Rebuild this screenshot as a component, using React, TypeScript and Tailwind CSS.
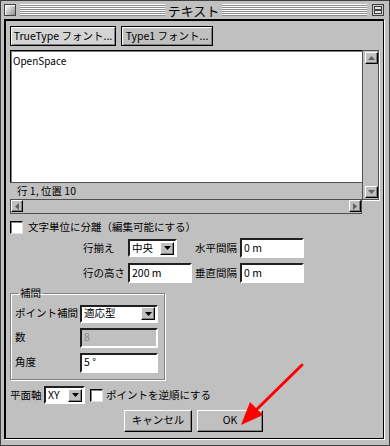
import React from 'react';

const stripes =
  'bg-[repeating-linear-gradient(to_bottom,#ffffff_0px,#ffffff_1px,#8c8c8c_1px,#8c8c8c_2px)]';
const raised =
  'bg-[#c0c0c0] border border-t-white border-l-white border-r-black border-b-black shadow-[inset_-1px_-1px_0_#808080]';
const sunken =
  'border-2 border-t-[#202020] border-l-[#202020] border-r-white border-b-white';

function DownTri({ color = '#000' }: { color?: string }) {
  return (
    <svg width="7" height="4" viewBox="0 0 7 4">
      <path d="M0 0h7L3.5 4z" fill={color} />
    </svg>
  );
}

function Button({ className, children }: { className: string; children: React.ReactNode }) {
  return (
    <div className={`flex items-center justify-center ${className}`}>
      {children}
    </div>
  );
}

function Field({ w, value, disabled }: { w: string; value: string; disabled?: boolean }) {
  return (
    <div
      className={`${w} h-[20px] ${sunken} flex items-center pl-[2px] ${
        disabled ? 'bg-[#c0c0c0] text-[#8a8a8a]' : 'bg-white'
      }`}
    >
      {value}
    </div>
  );
}

function Select({ w, value }: { w: string; value: string }) {
  return (
    <div className={`${w} h-[18px] ${sunken} bg-white flex items-center pl-[2px] pr-[1px]`}>
      <span className="flex-1">{value}</span>
      <div className={`w-[14px] h-[13px] ${raised} flex items-center justify-center`}>
        <DownTri />
      </div>
    </div>
  );
}

function Check() {
  return <div className="w-[13px] h-[13px] bg-white border border-t-black border-l-black border-r-[#e0e0e0] border-b-[#e0e0e0] shadow-[inset_1px_1px_0_#808080]" />;
}

function ArrowBox({ dir }: { dir: 'up' | 'down' | 'left' | 'right' }) {
  const paths: Record<string, string> = {
    up: 'M0 4h7L3.5 0z',
    down: 'M0 0h7L3.5 4z',
    left: 'M4 0v7L0 3.5z',
    right: 'M0 0v7L4 3.5z',
  };
  const vertical = dir === 'up' || dir === 'down';
  return (
    <div className={`${vertical ? 'w-[13px] h-[12px]' : 'w-[12px] h-[12px]'} ${raised} flex items-center justify-center`}>
      <svg width={vertical ? 7 : 4} height={vertical ? 4 : 7} viewBox={vertical ? '0 0 7 4' : '0 0 4 7'}>
        <path d={paths[dir]} fill="#606060" />
      </svg>
    </div>
  );
}

function TitleBar() {
  return (
    <div className="h-[18px] flex items-center">
      <div className="w-[12px] h-[12px] border border-[#404040] bg-[linear-gradient(135deg,#ffffff,#8f8f8f)] shadow-[inset_1px_1px_0_#fff]" />
      <div className={`ml-[4px] flex-1 h-[12px] ${stripes}`} />
      <span className="px-[3px] text-[13px] leading-none">テキスト</span>
      <div className={`flex-1 h-[12px] ${stripes}`} />
      <svg className="ml-[5px]" width="12" height="12" viewBox="0 0 12 12">
        <rect x="0.5" y="0.5" width="11" height="11" fill="#c8c8c8" stroke="#404040" />
        <rect x="2.5" y="2.5" width="7" height="3" fill="#e0e0e0" stroke="#404040" />
        <rect x="2.5" y="6.5" width="7" height="3" fill="#e0e0e0" stroke="#404040" />
      </svg>
    </div>
  );
}

export default function App() {
  return (
    <div className="relative w-[390px] h-[446px] bg-[#c0c0c0] border border-[#404040] pl-[3px] pr-[5px] pb-[6px] flex flex-col font-['Noto_Sans_CJK_JP',sans-serif] text-black text-[10.5px] leading-none select-none">
      <TitleBar />
      <div className="flex-1 flex flex-col border-l-2 border-t-2 border-r border-b border-black shadow-[1px_1px_0_#ffffff] pl-[4px] pt-[5px]">
        <div className="flex gap-[5px]">
          <Button className="w-[106px] h-[20px] bg-[#d4d4d4] border border-black shadow-[inset_1px_1px_0_#fff,inset_-1px_-1px_0_#808080]">
            TrueType フォント...
          </Button>
          <Button className="w-[92px] h-[20px] bg-[#c0c0c0] border border-black shadow-[inset_1px_1px_0_#fff,inset_-1px_-1px_0_#808080]">
            Type1 フォント...
          </Button>
        </div>

        <div className="mt-[4px] flex items-start">
          <div className="w-[352px] flex flex-col">
            <div className="h-[132px] bg-white border-t border-l border-black shadow-[inset_1px_1px_0_#808080] pl-[2px] pt-[5px] text-[10px]">
              OpenSpace
            </div>
            <div className="h-[18px] border-t border-b border-[#505050] flex items-center pl-[7px]">
              行 1, 位置 10
            </div>
            <div className="h-[14px] border-x border-b border-[#505050] flex justify-between">
              <ArrowBox dir="left" />
              <ArrowBox dir="right" />
            </div>
          </div>
          <div className="w-[17px] h-[150px] border border-[#505050] shadow-[1px_1px_0_#fff] flex flex-col justify-between p-[1px] pl-[2px]">
            <ArrowBox dir="up" />
            <ArrowBox dir="down" />
          </div>
        </div>

        <div className="mt-[6px] h-[14px] flex items-center gap-[5px]">
          <Check />
          <span>文字単位に分離（編集可能にする）</span>
        </div>

        <div className="mt-[4px] ml-[73px] grid grid-cols-[45px_67px_45px_64px] grid-rows-[20px_20px] gap-y-[5px] items-center">
          <span>行揃え</span>
          <Select w="w-[49px]" value="中央" />
          <span>水平間隔</span>
          <Field w="w-[64px]" value="0 m" />
          <span>行の高さ</span>
          <Field w="w-[64px]" value="200 m" />
          <span>垂直間隔</span>
          <Field w="w-[64px]" value="0 m" />
        </div>

        <fieldset className="mt-[5px] w-[155px] border border-[#808080] shadow-[1px_1px_0_#fff,inset_1px_1px_0_#fff] pl-[4px] pr-[6px] pb-[6px] pt-[6px]">
          <legend className="ml-[3px] px-[2px]">補間</legend>
          <div className="grid grid-cols-[65px_78px] gap-y-[5px] items-center">
            <span>ポイント補間</span>
            <Select w="w-[78px]" value="適応型" />
            <span>数</span>
            <Field w="w-[78px]" value="8" disabled />
            <span>角度</span>
            <Field w="w-[78px]" value="5 °" />
          </div>
        </fieldset>

        <div className="mt-[7px] h-[17px] flex items-center">
          <span className="w-[34px]">平面軸</span>
          <Select w="w-[41px]" value="XY" />
          <div className="ml-[5px]">
            <Check />
          </div>
          <span className="ml-[3px]">ポイントを逆順にする</span>
        </div>

        <div className="mt-[6px] ml-[114px] flex gap-[5px]">
          <Button className={`w-[68px] h-[22px] ${raised}`}>キャンセル</Button>
          <Button className={`w-[66px] h-[22px] ${raised}`}>OK</Button>
        </div>
      </div>

      <svg className="absolute left-0 top-0 pointer-events-none" width="390" height="446" viewBox="0 0 390 446">
        <line x1="301" y1="364" x2="253" y2="411" stroke="#ff0000" strokeWidth="3" strokeLinecap="round" />
        <polygon points="240,424 249,401 262,414" fill="#ff0000" />
      </svg>
    </div>
  );
}
